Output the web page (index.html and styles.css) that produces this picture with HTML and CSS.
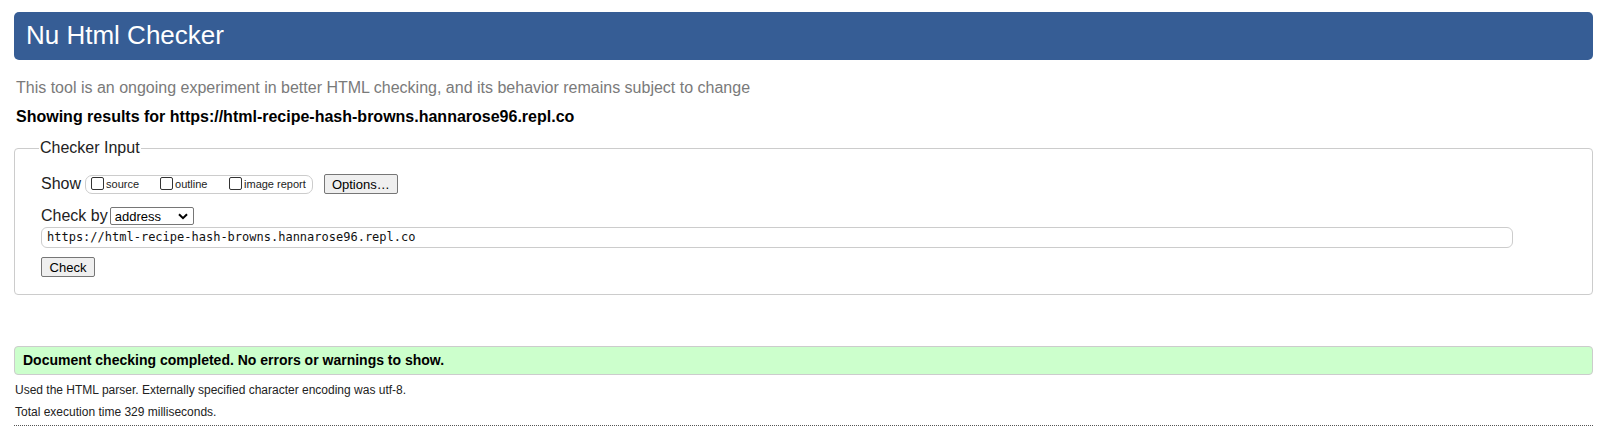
FILE: index.html
```html
<!DOCTYPE html>
<html>
<head>
<meta charset="utf-8">
<title>Nu Html Checker</title>
<link rel="stylesheet" href="styles.css">
</head>
<body>
<h1 class="title">Nu Html Checker</h1>
<p class="intro">This tool is an ongoing experiment in better HTML checking, and its behavior remains subject to change</p>
<p class="showing">Showing results for https://html-recipe-hash-browns.hannarose96.repl.co</p>
<fieldset class="checker">
  <legend class="legend">Checker Input</legend>
  <div class="row show-row">
    <span class="lbl">Show</span>
    <span class="opts">
      <label class="opt opt-source"><span class="cb"></span>source</label>
      <label class="opt opt-outline"><span class="cb"></span>outline</label>
      <label class="opt"><span class="cb"></span>image report</label>
    </span>
    <button class="btn btn-options">Options…</button>
  </div>
  <div class="row by-row">
    <span class="lbl">Check by</span>
    <span class="select">address<svg class="chev" width="10" height="7" viewBox="0 0 10 7"><path d="M1 1.2 L5 5.2 L9 1.2" fill="none" stroke="#000" stroke-width="2"/></svg></span>
  </div>
  <div class="url">https://html-recipe-hash-browns.hannarose96.repl.co</div>
  <button class="btn btn-check">Check</button>
</fieldset>
<div class="success">Document checking completed. No errors or warnings to show.</div>
<p class="details">Used the HTML parser. Externally specified character encoding was utf-8.</p>
<p class="details">Total execution time 329 milliseconds.</p>
<hr class="rule">
</body>
</html>
```
FILE: styles.css
```css
html, body {
  background: #fff;
}
body {
  margin: 0;
  padding: 12px 14px 0 14px;
  font-family: "Liberation Sans", Arial, sans-serif;
  color: #000;
}
.title {
  margin: 0;
  height: 48px;
  line-height: 46px;
  background: #365d95;
  color: #fff;
  font-size: 26px;
  font-weight: normal;
  padding-left: 12px;
  border-radius: 5px;
}
.intro {
  margin: 18px 0 0 2px;
  font-size: 16px;
  line-height: 20px;
  color: #7a7a7a;
}
.showing {
  margin: 9px 0 0 2px;
  font-size: 16px;
  line-height: 20px;
  font-weight: bold;
}
.checker {
  margin: 12px 0 0 0;
  padding: 16px 26px 17px 26px;
  border: 1px solid #ccc;
  border-radius: 4px;
}
.legend {
  font-size: 16px;
  color: #222;
  padding: 0 1px;
  margin-left: -2px;
}
.row {
  display: flex;
  align-items: center;
}
.lbl {
  font-size: 16px;
  color: #222;
}
.show-row {
  height: 22px;
}
.opts {
  display: flex;
  align-items: center;
  margin-left: 4px;
  height: 17px;
  padding: 0 6px 0 5px;
  border: 1px solid #ccc;
  border-radius: 7px;
}
.opt {
  display: flex;
  align-items: center;
  font-size: 11px;
  color: #222;
}
.opt-source { width: 69px; }
.opt-outline { width: 69px; }
.cb {
  width: 11px;
  height: 11px;
  border: 1px solid #333;
  border-radius: 2px;
  margin-right: 2px;
  margin-top: -2px;
}
.btn {
  font-family: "Liberation Sans", Arial, sans-serif;
  font-size: 13px;
  color: #000;
  background: #efefef;
  border: 1px solid #767676;
  border-radius: 2px;
  padding: 0 6px;
  height: 20px;
}
.btn-options {
  margin-left: 11px;
  width: 74px;
}
.by-row {
  margin-top: 11px;
  height: 20px;
}
.select {
  display: flex;
  align-items: center;
  justify-content: space-between;
  margin-left: 2px;
  width: 84px;
  height: 18px;
  box-sizing: border-box;
  border: 1px solid #767676;
  border-radius: 2px;
  padding: 0 5px 0 4px;
  font-size: 13px;
}
.url {
  margin-top: 1px;
  height: 21px;
  box-sizing: border-box;
  border: 1px solid #ccc;
  border-radius: 6px;
  padding: 0 5px;
  font-family: "DejaVu Sans Mono", monospace;
  font-size: 12px;
  line-height: 19px;
  color: #111;
  margin-right: 53px;
}
.btn-check {
  margin-top: 9px;
  width: 54px;
  height: 20px;
}
.success {
  margin-top: 51px;
  height: 29px;
  box-sizing: border-box;
  background: #ccffcc;
  border: 1px solid #ccc;
  border-radius: 4px;
  padding-left: 8px;
  font-size: 14px;
  line-height: 27px;
  font-weight: bold;
}
.details {
  margin: 9px 0 0 1px;
  font-size: 12px;
  line-height: 13px;
  color: #222;
}
.rule {
  margin: 6px 0 0 0;
  border: 0;
  border-top: 1px dotted #555;
}
```
